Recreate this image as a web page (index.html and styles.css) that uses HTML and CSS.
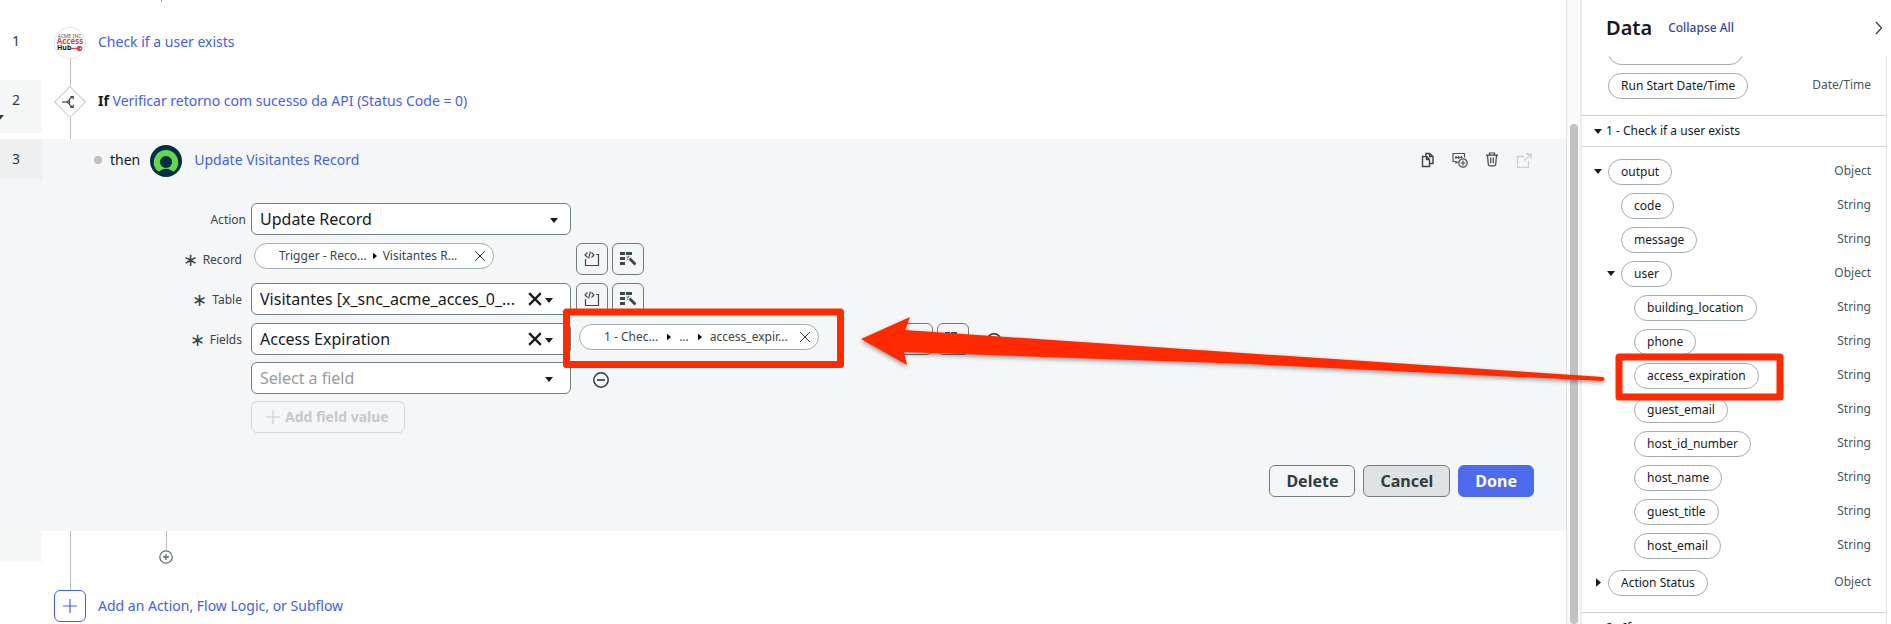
FILE: index.html
```html
<!DOCTYPE html>
<html lang="en">
<head>
<meta charset="utf-8">
<title>Flow Designer</title>
<link rel="stylesheet" href="styles.css">
</head>
<body>
<svg class="defs" aria-hidden="true">
  <symbol id="script" viewBox="0 0 16 16"><path d="M1.500 8v6.500h13v-11H12" fill="none" stroke="currentColor" stroke-width="1.200"/><path d="M3.500 1.500 1 4l2.500 2.500M7.500 1.500 10 4 7.500 6.500M6.500.5 4.500 7.500" fill="none" stroke="currentColor" stroke-width="1.100"/></symbol>
  <symbol id="wand" viewBox="0 0 16 16"><path d="M0 1h5v3H0zM6 1h6v3H6zM0 6h5v3H0zM0 11h5v3H0z" fill="currentColor"/><path d="m9.500 7.500 6 6" stroke="currentColor" stroke-width="2.800"/><path d="m6.500 6 1.500.5M8.500 4.800l.3 1.500M6.500 9l1.200-.8" stroke="currentColor"/></symbol>
  <symbol id="caret" viewBox="0 0 10 6"><path d="M0 0h10L5 6z" fill="currentColor"/></symbol>
  <symbol id="caret-right" viewBox="0 0 6 10"><path d="M0 0v10l6-5z" fill="currentColor"/></symbol>
  <symbol id="cross" viewBox="0 0 12 12"><path d="m1 1 10 10M11 1 1 11" stroke="currentColor" fill="none"/></symbol>
  <symbol id="minus" viewBox="0 0 16 16"><circle cx="8" cy="8" r="7.200" fill="none" stroke="currentColor" stroke-width="1.500"/><path d="M4 8h8" stroke="currentColor" stroke-width="1.600"/></symbol>
</svg>
<div class="app">
  <main class="flow">
    <div class="clipped"><span class="clipped-stem"></span></div>
    <section class="step step-one">
      <div class="gutter">1</div>
      <div class="rail">
        <svg class="badge" viewBox="0 0 32 32"><circle cx="16" cy="16" r="15.500" fill="#fff" stroke="#d5d9dc" stroke-dasharray="2 1"/><text x="16" y="10.500" class="logo-a" text-anchor="middle">ACME INC.</text><text x="16" y="17" class="logo-b" text-anchor="middle">Access</text><text x="3" y="23" class="logo-c">Hub</text><path d="M17 21.500h8" stroke="#d9414e" stroke-width="1.400"/><circle cx="25.500" cy="21.500" r="2.800" fill="#d9414e"/><circle cx="26.500" cy="21.500" r=".8" fill="#fff"/></svg>
        <span class="line"></span>
      </div>
      <div class="title"><a href="#">Check if a user exists</a></div>
    </section>
    <section class="step step-two">
      <div class="gutter shaded">2<svg class="gutter-caret" width="10" height="6"><use href="#caret"/></svg></div>
      <div class="rail">
        <span class="line short"></span>
        <svg class="badge" viewBox="0 0 32 32"><path d="M16 .7 31.300 16 16 31.300.7 16z" fill="#fff" stroke="#cfd3d5" stroke-width="1.200"/><g fill="none" stroke="#3c4649" stroke-width="1.200"><path d="M8 16h5"/><circle cx="14.500" cy="16" r="1.200"/><path d="M15 15c.5-2.500 1.500-3.500 3.500-4M15 17c.5 2.500 1.500 3.500 3.500 4M16.500 10.500h2.700v2.700M16.500 21.500h2.700v-2.700"/></g></svg>
        <span class="line"></span>
      </div>
      <div class="title"><b>If</b> <a href="#">Verificar retorno com sucesso da API (Status Code = 0)</a></div>
    </section>
    <section class="editor">
      <header class="editor-head">
        <div class="gutter">3</div>
        <span class="dot"></span><span class="then">then</span>
        <svg class="badge" viewBox="0 0 32 32"><circle cx="16" cy="16" r="16" fill="#032d42"/><path d="M16 5A12.300 12.300 0 0 0 7.200 25.800c.7.700 1.800.7 2.600.1a10.500 10.500 0 0 1 12.400 0c.8.600 1.900.6 2.600-.1A12.300 12.300 0 0 0 16 5z" fill="#62d84e"/><circle cx="16" cy="17" r="6" fill="#032d42"/></svg>
        <a href="#">Update Visitantes Record</a>
        <div class="tools">
          <button aria-label="Copy"><svg viewBox="0 0 16 16" fill="none" stroke="#3c4649" stroke-width="1.400"><path d="M2.500 4.500h4l3 3v7h-7zM6.500 4.500v3h3"/><path d="M6 4V1.500h3.500l3.500 3v7H10M9.500 1.500v3H13"/></svg></button>
          <button aria-label="Comment"><svg viewBox="0 0 16 16" fill="none" stroke="#4b565a" stroke-width="1.200"><path d="M6.500 9.500 4 11V9.500H1v-8h11.500v4"/><path d="M4 4v3M6.700 4v3M9.500 4v2M3 5.500h7.500"/><circle cx="11" cy="11" r="4.200"/><path d="M11 8.500v5M8.500 11h5"/></svg></button>
          <button aria-label="Delete step"><svg viewBox="0 0 16 16" fill="none" stroke="#3c4649" stroke-width="1.200"><path d="M2 3.200h12M5.500 3V1h5v2M3.500 3.200l.8 9.300q.2 1.300 1.500 1.300h4.400q1.300 0 1.500-1.300l.8-9.300M6.700 5.500v5.700M9.300 5.500v5.700"/></svg></button>
          <button aria-label="Open" disabled><svg viewBox="0 0 16 16" fill="none" stroke="#cdd0d2" stroke-width="1.300"><path d="M8 4.500H1.500v11h11V9M8 9l6.500-6.500M10 2h5v5"/></svg></button>
        </div>
      </header>
      <form class="form">
        <div class="row"><label class="plain" for="action">Action</label>
          <div class="select"><select id="action"><option>Update Record</option></select><svg class="caret far" width="8" height="5"><use href="#caret"/></svg></div></div>
        <div class="row"><span class="label"><i>∗</i>Record</span>
          <div class="pill-slot"><span class="pill"><span>Trigger - Reco...</span><svg class="sep" width="4" height="8"><use href="#caret-right"/></svg><span>Visitantes R...</span><button type="button" aria-label="Remove"><svg width="12" height="12"><use href="#cross"/></svg></button></span></div>
          <button type="button" class="tool" aria-label="Script"><svg width="16" height="16"><use href="#script"/></svg></button><button type="button" class="tool" aria-label="Transform"><svg width="16" height="16"><use href="#wand"/></svg></button></div>
        <div class="row"><label class="label" for="table"><i>∗</i>Table</label>
          <div class="select"><select id="table"><option>Visitantes [x_snc_acme_acces_0_...</option></select><button type="button" class="clear" aria-label="Clear"><svg width="14" height="14"><use href="#cross"/></svg></button><svg class="caret" width="8" height="5"><use href="#caret"/></svg></div>
          <button type="button" class="tool" aria-label="Script"><svg width="16" height="16"><use href="#script"/></svg></button><button type="button" class="tool" aria-label="Transform"><svg width="16" height="16"><use href="#wand"/></svg></button></div>
        <div class="fields">
          <div class="row"><label class="label" for="field"><i>∗</i>Fields</label>
            <div class="select"><select id="field"><option>Access Expiration</option></select><button type="button" class="clear" aria-label="Clear"><svg width="14" height="14"><use href="#cross"/></svg></button><svg class="caret" width="8" height="5"><use href="#caret"/></svg></div>
            <div class="pill-slot"><span class="pill path"><span>1 - Chec...</span><svg class="sep" width="4" height="8"><use href="#caret-right"/></svg><span>...</span><svg class="sep" width="4" height="8"><use href="#caret-right"/></svg><span>access_expir...</span><button type="button" aria-label="Remove"><svg width="12" height="12"><use href="#cross"/></svg></button></span></div>
            <button type="button" class="tool" aria-label="Script"><svg width="16" height="16"><use href="#script"/></svg></button><button type="button" class="tool" aria-label="Transform"><svg width="16" height="16"><use href="#wand"/></svg></button>
            <button type="button" class="remove near" aria-label="Remove field"><svg width="16" height="16"><use href="#minus"/></svg></button></div>
          <div class="row"><span class="label"></span>
            <div class="select"><select class="empty" aria-label="Select a field"><option>Select a field</option></select><svg class="caret" width="8" height="5"><use href="#caret"/></svg></div>
            <button type="button" class="remove" aria-label="Remove field"><svg width="16" height="16"><use href="#minus"/></svg></button></div>
          <div class="row"><span class="label"></span><button type="button" class="add-field" disabled><svg width="14" height="14" viewBox="0 0 14 14"><path d="M7 0v14M0 7h14" stroke="currentColor"/></svg>Add field value</button></div>
        </div>
        <div class="actions"><button type="button">Delete</button><button type="button" class="cancel">Cancel</button><button type="button" class="done">Done</button></div>
      </form>
    </section>
    <div class="tail">
      <div class="gutter shaded"></div>
      <div class="rail"><span class="line"></span></div>
      <div class="branch"><span class="line"></span><button aria-label="Add to branch"><svg viewBox="0 0 14 14" fill="none" stroke="#5f6f71"><circle cx="7" cy="7" r="6.200" stroke-width="1.200"/><path d="M7 4v6M4 7h6" stroke-width="1.400"/></svg></button></div>
    </div>
    <div class="add-step"><button aria-label="Add"><svg width="14" height="14" viewBox="0 0 14 14"><path d="M7 0v14M0 7h14" stroke="currentColor" stroke-width="1.200"/></svg></button><a href="#">Add an Action, Flow Logic, or Subflow</a></div>
  </main>
  <div class="scroll"><span class="thumb"></span></div>
  <aside class="data">
    <header class="data-head"><h1>Data</h1><a href="#">Collapse All</a><button aria-label="Collapse panel"><svg width="8" height="14" viewBox="0 0 8 14"><path d="m1 1 5.500 6L1 13" fill="none" stroke="#2f3a3d" stroke-width="1.200"/></svg></button></header>
    <div class="data-body">
      <div class="item cut"><button class="chip" aria-label="Previous value"></button></div>
      <div class="item last"><button class="chip">Run Start Date/Time</button><span>Date/Time</span></div>
      <h2><svg width="8" height="5"><use href="#caret"/></svg>1 - Check if a user exists</h2>
      <div class="tree">
        <div class="item"><svg class="tw" width="8" height="5"><use href="#caret"/></svg><button class="chip">output</button><span>Object</span></div>
        <div class="item in1"><button class="chip">code</button><span>String</span></div>
        <div class="item in1"><button class="chip">message</button><span>String</span></div>
        <div class="item in1"><svg class="tw" width="8" height="5"><use href="#caret"/></svg><button class="chip">user</button><span>Object</span></div>
        <div class="item in2"><button class="chip">building_location</button><span>String</span></div>
        <div class="item in2"><button class="chip">phone</button><span>String</span></div>
        <div class="item in2"><button class="chip">access_expiration</button><span>String</span></div>
        <div class="item in2"><button class="chip">guest_email</button><span>String</span></div>
        <div class="item in2"><button class="chip">host_id_number</button><span>String</span></div>
        <div class="item in2"><button class="chip">host_name</button><span>String</span></div>
        <div class="item in2"><button class="chip">guest_title</button><span>String</span></div>
        <div class="item in2"><button class="chip">host_email</button><span>String</span></div>
        <div class="item status"><svg class="tw closed" width="5" height="9"><use href="#caret-right"/></svg><button class="chip">Action Status</button><span>Object</span></div>
      </div>
      <h2><svg width="8" height="9"><use href="#caret-right"/></svg>2 - If</h2>
    </div>
  </aside>
  <svg class="notes" width="1891" height="624" aria-hidden="true">
    <g fill="none" stroke="#ff2a00" stroke-width="7" stroke-linejoin="round"><rect x="566.500" y="312" width="274" height="52.500"/><rect x="1619" y="357" width="161" height="40"/></g>
    <path class="arrow" d="M861 339 910 317 905 330 1250 353.500 1603 377q3 2 0 4L1250 364 904 352 907 365z" fill="#ff2a00"/>
  </svg>
</div>
</body>
</html>
```
FILE: styles.css
```css
* { box-sizing: border-box; }
body { margin: 0; background: #fff; color: #161b1c; font: 14px/20px "Noto Sans", sans-serif; }
button { font: inherit; color: inherit; margin: 0; padding: 0; border: 0; background: none; }
svg { display: block; flex: none; }
a { color: #4460e8; text-decoration: none; }
.defs { position: absolute; width: 0; height: 0; }
.app { position: relative; display: flex; height: 100vh; overflow: hidden; }
.flow { flex: 1; min-width: 0; border-right: 1px solid #e1e2e3; }
.clipped { height: 3px; padding-left: 161px; }
.clipped-stem { display: block; width: 1px; height: 2px; background: #8496f0; }
.gutter { width: 42px; flex: none; padding-right: 10px; text-align: center; color: #2f3a3d; }
.step { display: flex; }
.step-one { height: 77px; }
.step-one .gutter { padding-top: 28px; }
.step-one .rail { padding-top: 24px; }
.step-one .title { padding-top: 29px; }
.step-two { height: 59px; }
.step-two .gutter { position: relative; height: 53px; padding-top: 10px; }
.step-two .title { padding-top: 11px; }
.shaded { background: #f6f8f8; }
.gutter-caret { position: absolute; left: -6px; top: 35px; color: #2f3a3d; }
.rail { width: 32px; margin: 0 12px; flex: none; display: flex; flex-direction: column; align-items: center; }
.line { width: 1px; flex: 1; background: #b9bbc0; }
.line.short { flex: none; height: 6px; }
.badge { width: 32px; height: 32px; }
.logo-a { font-size: 5px; fill: #555; }
.logo-b { font-size: 8px; font-weight: 700; fill: #d9414e; }
.logo-c { font-size: 7px; font-weight: 700; fill: #111; }
.editor { background: #f4f6f8; }
.editor-head { display: flex; align-items: flex-start; }
.editor-head .gutter { height: 40px; padding-top: 10px; background: #eef0f1; }
.dot { width: 8px; height: 8px; margin: 17px 8px 0 52px; border-radius: 50%; background: #bfc0c5; }
.then { margin: 11px 10px 0 0; }
.editor-head .badge { margin: 6px 12px 0 0; }
.editor-head a { margin-top: 11px; }
.tools { display: flex; gap: 16px; margin: 13px 34px 0 auto; }
.tools svg { width: 16px; height: 16px; }
.form { display: flex; flex-direction: column; gap: 8px; padding: 24px 32px 34px 0; }
.fields { display: flex; flex-direction: column; gap: 7px; }
.row { display: flex; align-items: flex-start; }
.row > label, .row > .label { width: 251px; flex: none; padding: 7px 9px 0 0; font-size: 12px; text-align: right; color: #3a4547; }
.row > .plain { padding-right: 5px; }
.label i { font-style: normal; font-size: 18px; line-height: 14px; vertical-align: -2px; margin-right: 5px; }
.select { position: relative; width: 320px; }
select { appearance: none; width: 100%; height: 32px; padding: 0 8px; display: block; border: 1px solid #6e7e81; border-radius: 6px; background: #fff; color: #161b1c; font: 16px/24px "Noto Sans", sans-serif; }
select.empty { color: #9b9b9b; }
.caret { position: absolute; right: 18px; top: 15px; }
.caret.far { right: 13px; }
.clear { position: absolute; right: 29px; top: 9px; }
.clear svg { stroke-width: 2; }
.pill-slot { width: 320px; padding-left: 3px; }
.select + .pill-slot { padding: 1px 0 0 8px; width: 325px; }
.pill { display: flex; align-items: center; width: 240px; height: 26px; padding: 0 7px 0 24px; border: 1px solid #a3aeb2; border-radius: 13px; background: #fff; font-size: 12px; color: #3a4547; }
.pill button { margin-left: auto; }
.sep { margin: 0 6px; color: #000; }
.path .sep { margin: 0 8px 0 9px; }
.tool { width: 32px; height: 32px; flex: none; margin-left: 5px; display: grid; place-items: center; border: 1px solid #6e7e81; border-radius: 6px; color: #3a4a4b; }
.tool + .tool { margin-left: 4px; }
.remove { margin: 10px 0 0 22px; color: #2f3a3d; }
.remove.near { margin-left: 17px; }
.add-field { display: flex; align-items: center; gap: 5px; height: 32px; padding: 0 15px 0 14px; border: 1px solid #d5d8da; border-radius: 6px; color: #c7cacc; font-weight: 700; }
.actions { display: flex; justify-content: flex-end; gap: 8px; margin-top: 24px; }
.actions button { height: 32px; padding: 0 16px; border: 1px solid #6e7e81; border-radius: 6px; font-size: 16px; font-weight: 700; color: #2f3d40; }
.actions .cancel { background: #dee2e3; }
.actions .done { background: #4f6bed; border-color: #4f6bed; color: #fff; }
.tail { display: flex; height: 59px; }
.tail .gutter { height: 31px; }
.branch { margin-left: 61px; display: flex; flex-direction: column; align-items: center; }
.branch .line { flex: none; height: 19px; }
.branch button svg { width: 14px; height: 14px; }
.add-step { display: flex; align-items: center; gap: 12px; padding-left: 54px; }
.add-step button { width: 32px; height: 32px; display: grid; place-items: center; border: 1px solid #4460e8; border-radius: 6px; color: #4460e8; }
.scroll { width: 15px; padding: 124px 3px 0; background: #fafafa; border-right: 2px solid #ededee; }
.thumb { display: block; width: 8px; height: 100%; border-radius: 4px; background: #c1c1c1; }
.data { width: 309px; flex: none; }
.data-head { display: flex; align-items: center; height: 56px; padding: 0 8px 0 24px; }
.data-head h1 { margin: 0 16px 0 0; font-size: 20px; line-height: 28px; font-weight: 600; }
.data-head a { font-size: 12px; font-weight: 500; color: #3346a8; }
.data-head button { margin-left: auto; }
.data-body { margin-right: 4px; border-right: 1px solid #e1e2e3; overflow: hidden; }
.item { display: flex; align-items: center; height: 26px; padding: 0 15px 0 26px; margin-bottom: 8px; font-size: 12px; position: relative; }
.item.cut { align-items: flex-end; height: 9px; overflow: hidden; }
.item.last { margin-bottom: 16px; }
.item > span { margin: -2px 0 0 auto; color: #4a5659; }
.chip { height: 26px; padding: 0 12px; border: 1px solid #a3aeb2; border-radius: 13px; background: #fff; }
.cut .chip { flex: none; width: 135px; }
.tree { padding: 12px 0 8px; border-top: 1px solid #cfd5d7; }
.tw { position: absolute; left: 12px; top: 10px; }
.tw.closed { left: 14px; top: 8px; }
.in1 { padding-left: 39px; }
.in1 .tw { left: 25px; }
.in2 { padding-left: 52px; }
.item.status { margin-top: 11px; }
.data-body h2 { display: flex; align-items: center; gap: 4px; height: 31px; margin: 0; padding-left: 12px; border-top: 1px solid #cfd5d7; font-size: 12px; font-weight: 400; }
.notes { position: absolute; left: 0; top: 0; pointer-events: none; }
.arrow { filter: drop-shadow(0 2px 2px rgba(0, 0, 0, .4)); }
```
